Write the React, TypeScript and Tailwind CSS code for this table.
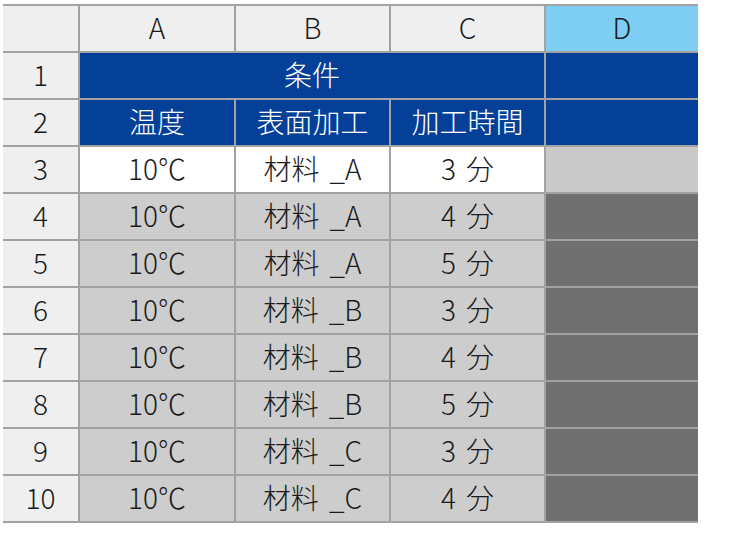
const rows = [
  { n: 3, temp: "10℃", mat: "材料 _A", time: "3 分", white: true },
  { n: 4, temp: "10℃", mat: "材料 _A", time: "4 分" },
  { n: 5, temp: "10℃", mat: "材料 _A", time: "5 分" },
  { n: 6, temp: "10℃", mat: "材料 _B", time: "3 分" },
  { n: 7, temp: "10℃", mat: "材料 _B", time: "4 分" },
  { n: 8, temp: "10℃", mat: "材料 _B", time: "5 分" },
  { n: 9, temp: "10℃", mat: "材料 _C", time: "3 分" },
  { n: 10, temp: "10℃", mat: "材料 _C", time: "4 分" },
];

const cell = "flex items-center justify-center pb-[3px]";

export default function App() {
  return (
    <div
      className="h-[536px] w-[750px] bg-white pl-[3px] pt-[4px] text-[28px] font-light leading-none text-[#1a1a1a] [word-spacing:4px]"
      style={{ fontFamily: '"Noto Sans CJK JP", sans-serif' }}
    >
      <div className="grid w-fit auto-rows-[45px] grid-cols-[75px_154px_153px_153px_152px] gap-[2px] border-y-2 border-[#a2a2a2] bg-[#a2a2a2]">
        <div className="bg-[#efefef]" />
        <div className={`${cell} bg-[#efefef]`}>A</div>
        <div className={`${cell} bg-[#efefef]`}>B</div>
        <div className={`${cell} bg-[#efefef]`}>C</div>
        <div className={`${cell} bg-[#7ecdf2]`}>D</div>

        <div className={`${cell} bg-[#efefef]`}>1</div>
        <div className={`${cell} col-span-3 bg-[#043f98] text-white`}>条件</div>
        <div className="bg-[#043f98]" />

        <div className={`${cell} bg-[#efefef]`}>2</div>
        <div className={`${cell} bg-[#043f98] text-white`}>温度</div>
        <div className={`${cell} bg-[#043f98] text-white`}>表面加工</div>
        <div className={`${cell} bg-[#043f98] text-white`}>加工時間</div>
        <div className="bg-[#043f98]" />

        {rows.map((r) => (
          <Row key={r.n} {...r} />
        ))}
      </div>
    </div>
  );
}

function Row({ n, temp, mat, time, white }: { n: number; temp: string; mat: string; time: string; white?: boolean }) {
  const bg = white ? "bg-white" : "bg-[#cdcdcd]";
  return (
    <>
      <div className={`${cell} bg-[#efefef]`}>{n}</div>
      <div className={`${cell} ${bg}`}>{temp}</div>
      <div className={`${cell} ${bg}`}>{mat}</div>
      <div className={`${cell} ${bg}`}>{time}</div>
      <div className={white ? "bg-[#c9c9c9]" : "bg-[#707070]"} />
    </>
  );
}
